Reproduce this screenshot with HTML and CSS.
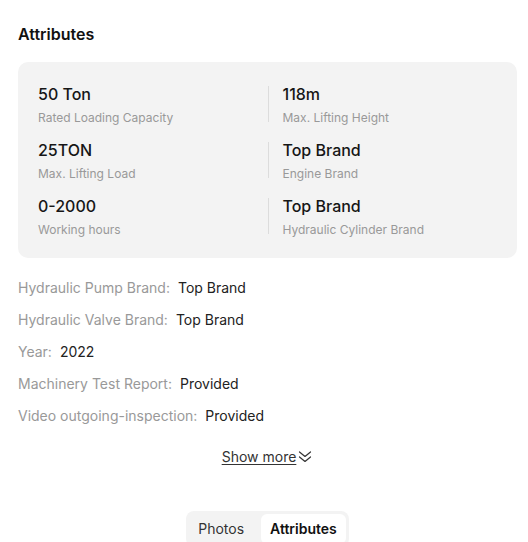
FILE: index.html
```html
<!DOCTYPE html>
<html>
<head>
<meta charset="utf-8">
<link rel="stylesheet" href="styles.css">
</head>
<body>
<div class="page">
  <h2 class="title">Attributes</h2>
  <div class="card">
    <div class="cell"><div class="val">50 Ton</div><div class="lab">Rated Loading Capacity</div></div>
    <div class="cell right"><div class="val">118m</div><div class="lab">Max. Lifting Height</div></div>
    <div class="cell"><div class="val">25TON</div><div class="lab">Max. Lifting Load</div></div>
    <div class="cell right"><div class="val">Top Brand</div><div class="lab">Engine Brand</div></div>
    <div class="cell"><div class="val">0-2000</div><div class="lab">Working hours</div></div>
    <div class="cell right"><div class="val">Top Brand</div><div class="lab">Hydraulic Cylinder Brand</div></div>
  </div>
  <ul class="list">
    <li><span class="k">Hydraulic Pump Brand:</span><span class="v">Top Brand</span></li>
    <li><span class="k">Hydraulic Valve Brand:</span><span class="v">Top Brand</span></li>
    <li><span class="k">Year:</span><span class="v">2022</span></li>
    <li><span class="k">Machinery Test Report:</span><span class="v">Provided</span></li>
    <li><span class="k">Video outgoing-inspection:</span><span class="v">Provided</span></li>
  </ul>
  <div class="more">
    <span class="more-link">Show more</span>
    <svg class="chev" width="16" height="16" viewBox="0 0 16 16" fill="none" stroke="#333" stroke-width="1.2" stroke-linecap="round" stroke-linejoin="round"><path d="M2.5 3l5.5 4.5 5.5-4.5"/><path d="M2.5 8l5.5 4.5 5.5-4.5"/></svg>
  </div>
  <div class="tabs-wrap">
    <div class="tabs">
      <div class="tab">Photos</div>
      <div class="tab active">Attributes</div>
    </div>
  </div>
</div>
</body>
</html>
```
FILE: styles.css
```css
* { box-sizing: border-box; }
html, body { margin: 0; padding: 0; background: #fff; }
body { font-family: Inter, "Noto Sans", sans-serif; color: #111; }
.page { padding: 22px 11px 0 18px; }
.title { margin: 0 0 16px; font-size: 16px; line-height: 24px; font-weight: 600; color: #111; }
.card {
  background: #f3f3f3;
  border-radius: 10px;
  padding: 20px 20px;
  display: grid;
  grid-template-columns: 1fr 1fr;
  row-gap: 12px;
}
.cell { position: relative; height: 44px; }
.cell.right { padding-left: 15px; }
.cell.right::before {
  content: "";
  position: absolute;
  left: 0;
  top: 4px;
  bottom: 4px;
  width: 1px;
  background: #dcdcdc;
}
.val { font-size: 16px; line-height: 24px; font-weight: 500; color: #161616; }
.lab { margin-top: 3px; font-size: 12px; line-height: 18px; color: #999; }
.list { list-style: none; margin: 14px 0 0; padding: 0; }
.list li { font-size: 14px; line-height: 32px; display: flex; gap: 8px; }
.k { color: #999; }
.v { color: #222; }
.more { margin-top: 15px; display: flex; justify-content: center; align-items: center; gap: 1px; height: 20px; }
.more-link { font-size: 14px; line-height: 20px; color: #333; text-decoration: underline; text-underline-offset: 2px; }
.chev { display: block; }
.tabs-wrap { margin-top: 44px; display: flex; justify-content: center; }
.tabs {
  display: flex;
  gap: 8px;
  background: #f3f3f3;
  border-radius: 8px;
  padding: 3px 3px 3px 3px;
}
.tab { font-size: 14px; line-height: 30px; padding: 0 9px; color: #333; border-radius: 6px; }
.tab.active { background: #fff; font-weight: 600; color: #111; }
```
